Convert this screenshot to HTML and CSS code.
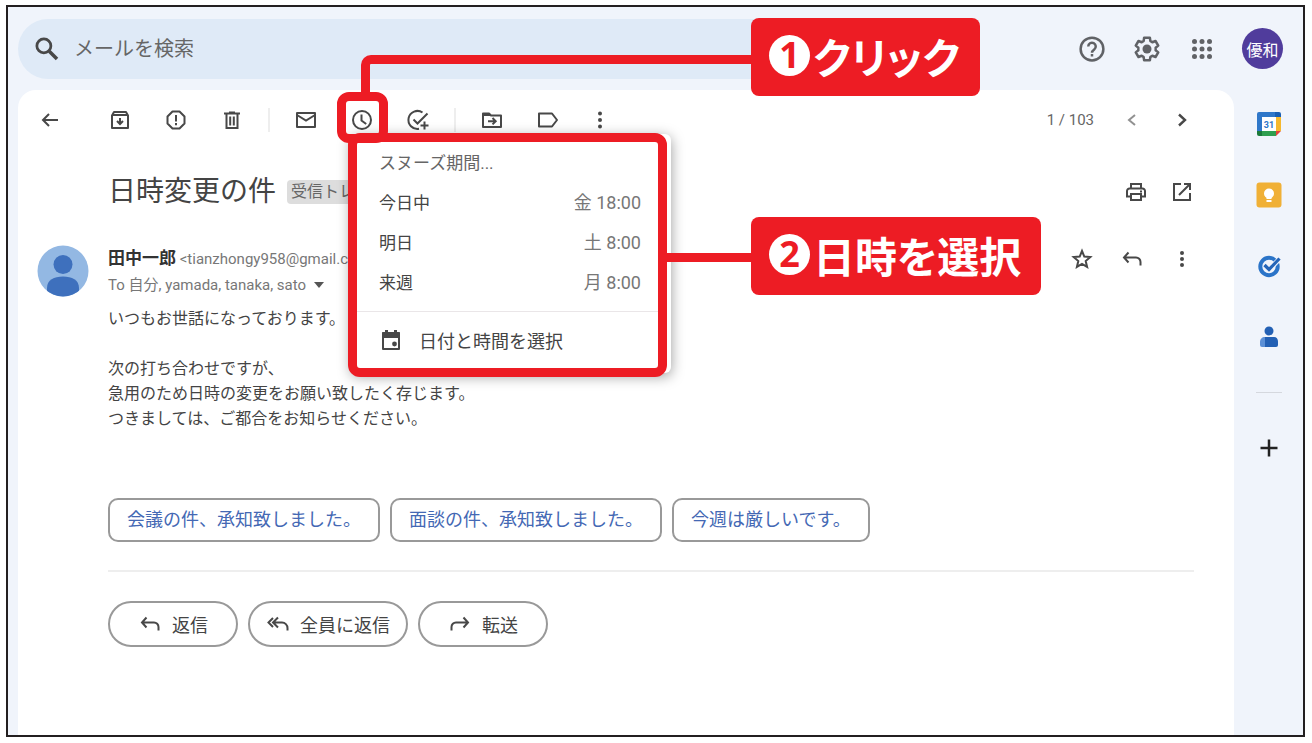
FILE: index.html
```html
<!DOCTYPE html>
<html lang="ja">
<head>
<meta charset="utf-8">
<meta name="viewport" content="width=device-width, initial-scale=1">
<title>日時変更の件</title>
<link rel="stylesheet" href="styles.css">
</head>
<body>
<div class="frame">
  <header class="topbar">
    <label class="search">
      <svg class="icon icon-lg" viewBox="0 0 24 24"><circle cx="9.5" cy="9.5" r="5.6" stroke-width="2.2"/><path d="M13.8 13.8L20 20" stroke-width="2.8"/></svg>
      <input class="search-input" type="search" placeholder="メールを検索" aria-label="メールを検索">
    </label>
    <nav class="top-actions">
      <button class="btn" aria-label="ヘルプ"><svg class="icon icon-lg soft" viewBox="0 0 24 24"><circle cx="12" cy="12" r="9.1"/><path d="M9 10a3 3 0 1 1 4.8 2.4c-1.1.8-1.8 1.3-1.8 2.6"/><path class="solid" d="M11 16h2v2h-2z"/></svg></button>
      <button class="btn" aria-label="設定"><svg class="icon icon-lg soft" viewBox="0 0 24 24"><path d="M18.9 13a7 7 0 0 0 0-2l2.100-1.700-2.200-3.700-2.500 1a7 7 0 0 0-1.600-.9L14.300 3h-4.600l-.4 2.700a7 7 0 0 0-1.600.9l-2.500-1L3 9.300 5.100 11a7 7 0 0 0 0 2L3 14.700l2.200 3.700 2.500-1a7 7 0 0 0 1.600.9l.4 2.700h4.600l.4-2.700a7 7 0 0 0 1.600-.9l2.500 1 2.200-3.700z" stroke-linejoin="round"/><circle class="solid" cx="12" cy="12" r="3.600"/></svg></button>
      <button class="btn" aria-label="アプリ"><svg class="icon icon-lg soft" viewBox="0 0 24 24"><g class="solid"><circle cx="6" cy="6" r="2"/><circle cx="12" cy="6" r="2"/><circle cx="18" cy="6" r="2"/><circle cx="6" cy="12" r="2"/><circle cx="12" cy="12" r="2"/><circle cx="18" cy="12" r="2"/><circle cx="6" cy="18" r="2"/><circle cx="12" cy="18" r="2"/><circle cx="18" cy="18" r="2"/></g></svg></button>
    </nav>
    <button class="btn account">優和</button>
  </header>

  <div class="workspace">
    <main class="mail">
      <div class="toolbar">
        <button class="btn back" aria-label="戻る"><svg class="icon" viewBox="0 0 24 24"><path d="M20 12H5.500M11 6l-6 6 6 6"/></svg></button>
        <div class="tools">
          <button class="btn" aria-label="アーカイブ"><svg class="icon" viewBox="0 0 24 24"><path d="M4 7.500V20h16V7.500L18 4H6z" stroke-linejoin="round"/><path d="M4 7h16M12 10v5.500M9 13l3 3 3-3"/></svg></button>
          <button class="btn" aria-label="迷惑メールを報告"><svg class="icon" viewBox="0 0 24 24"><path d="M8.500 3.500h7l5 5v7l-5 5h-7l-5-5v-7z" stroke-linejoin="round"/><path d="M12 7v6.500M12 15v2.200"/></svg></button>
          <button class="btn" aria-label="削除"><svg class="icon" viewBox="0 0 24 24"><path d="M4 5.500h16M9 4.500h6M6.500 6v14h11V6M10.200 8.500v9M13.800 8.500v9"/></svg></button>
        </div>
        <span class="separator"></span>
        <div class="tools">
          <button class="btn" aria-label="未読にする"><svg class="icon" viewBox="0 0 24 24"><path d="M3 5h18v14H3z" stroke-linejoin="round"/><path d="M3 7l9 5.500L21 7"/></svg></button>
          <button class="btn" aria-label="スヌーズ"><svg class="icon" viewBox="0 0 24 24"><circle cx="12" cy="12" r="9"/><path d="M11.500 6.500v6l4.700 3.500"/></svg></button>
          <button class="btn" aria-label="ToDoリストに追加"><svg class="icon" viewBox="0 0 24 24"><path d="M16.500 4.500A9 9 0 1 0 13 20.800M7.500 11.500l4 4L21.500 5.500M18.500 13.500v8M14.500 17.500h8"/></svg></button>
        </div>
        <span class="separator"></span>
        <div class="tools">
          <button class="btn" aria-label="移動"><svg class="icon" viewBox="0 0 24 24"><path d="M3 19V5.500h6l2 2h10V19z" stroke-linejoin="round"/><path class="solid" d="M3 5h6l3 3H3z"/><path d="M8 13.200h7M12.500 10l3.200 3.200-3.200 3.200"/></svg></button>
          <button class="btn" aria-label="ラベル"><svg class="icon" viewBox="0 0 24 24"><path d="M3 5.500h13l5 6.500-5 6.500H3z" stroke-linejoin="round"/></svg></button>
          <button class="btn narrow" aria-label="その他"><svg class="icon" viewBox="0 0 24 24"><g class="solid"><circle cx="12" cy="5.500" r="2"/><circle cx="12" cy="12" r="2"/><circle cx="12" cy="18.500" r="2"/></g></svg></button>
        </div>
        <div class="pager">
          <span class="count">1 / 103</span>
          <button class="btn faded" aria-label="前へ"><svg class="icon" viewBox="0 0 24 24"><path d="M15 7l-6 5 6 5"/></svg></button>
          <button class="btn" aria-label="次へ"><svg class="icon" viewBox="0 0 24 24"><path d="M9 6.500l6 5.500-6 5.500" stroke-width="2.400"/></svg></button>
        </div>
      </div>

      <div class="subject-row">
        <h1 class="subject">日時変更の件</h1>
        <span class="label">受信トレイ</span>
        <div class="row-actions">
          <button class="btn" aria-label="印刷"><svg class="icon" viewBox="0 0 24 24"><path d="M7 8V4h10v4M6.500 16.500H3V11a2.500 2.500 0 0 1 2.500-2.500h13A2.500 2.500 0 0 1 21 11v5.500h-3.500M7 14h10v6H7z"/><path d="M16 11.500h2"/></svg></button>
          <button class="btn" aria-label="新しいウィンドウで開く"><svg class="icon" viewBox="0 0 24 24"><path d="M11 4H4v16h16v-7M14 4h6v6M19.500 4.500L9 15"/></svg></button>
        </div>
      </div>

      <div class="sender-row">
        <svg class="sender-photo" viewBox="0 0 52 52"><defs><clipPath id="photo"><circle cx="26" cy="26" r="25.500"/></clipPath></defs><g clip-path="url(#photo)"><path fill="#93b8e3" d="M0 0h52v52H0z"/><circle cx="26" cy="19.500" r="9.500" fill="#3e70bd"/><path fill="#3e70bd" d="M10 52v-9c0-8 7-11.500 16-11.500S42 35 42 43v9z"/></g></svg>
        <div class="sender">
          <div class="sender-line"><strong class="sender-name">田中一郎</strong> <span class="address">&lt;tianzhongy958@gmail.com&gt;</span></div>
          <div class="recipients">To 自分, yamada, tanaka, sato <svg class="caret" viewBox="0 0 10 6"><path d="M0 0h10L5 6z"/></svg></div>
        </div>
        <div class="row-actions">
          <button class="btn" aria-label="スター"><svg class="icon" viewBox="0 0 24 24"><path d="M12 4l2.300 5.600 6 .5-4.600 3.900 1.400 5.900L12 16.800l-5.100 3.100 1.400-5.900-4.600-3.900 6-.5z"/></svg></button>
          <button class="btn" aria-label="返信"><svg class="icon" viewBox="0 0 24 24"><path d="M8.500 5.500l-4.500 5 4.500 5M4.500 10.500H16a4.500 4.500 0 0 1 4.500 4.500v3.500"/></svg></button>
          <button class="btn" aria-label="その他"><svg class="icon" viewBox="0 0 24 24"><g class="solid"><circle cx="12" cy="6" r="2"/><circle cx="12" cy="12" r="2"/><circle cx="12" cy="18" r="2"/></g></svg></button>
        </div>
      </div>

      <div class="content">
        <div class="message">
          <p>いつもお世話になっております。</p>
          <p>次の打ち合わせですが、<br>急用のため日時の変更をお願い致したく存じます。<br>つきましては、ご都合をお知らせください。</p>
        </div>
        <div class="suggestions">
          <button class="suggestion">会議の件、承知致しました。</button>
          <button class="suggestion">面談の件、承知致しました。</button>
          <button class="suggestion">今週は厳しいです。</button>
        </div>
        <div class="replies">
          <button class="reply"><svg class="icon" viewBox="0 0 24 24"><path d="M8.500 5.500l-4.500 5 4.500 5M4.500 10.500H16a4.500 4.500 0 0 1 4.500 4.500v3.500"/></svg>返信</button>
          <button class="reply wide"><svg class="icon" viewBox="0 0 24 24"><path d="M7 6l-4.500 4.500L7 15M12 5.500l-5 5 5 5M7.500 10.500H16a5.500 5.500 0 0 1 5.500 5.500v2.500"/></svg>全員に返信</button>
          <button class="reply"><svg class="icon" viewBox="0 0 24 24"><path d="M15.500 5.500l4.500 5-4.500 5M19.500 10.500H8A4.500 4.500 0 0 0 3.500 15v3.500"/></svg>転送</button>
        </div>
      </div>
    </main>

    <aside class="rail">
      <button class="btn" aria-label="カレンダー"><svg class="app" viewBox="0 0 26 26"><path fill="#fff" d="M5 5h16v16H5z"/><path fill="#2f77c9" d="M3 1h16v5H6v15H1V3a2 2 0 0 1 2-2z"/><path fill="#1a5fb4" d="M19 1h4a2 2 0 0 1 2 2v3h-6z"/><path fill="#f5b82e" d="M20 6h5v14h-5z"/><path fill="#2f9e4f" d="M6 20h14v5H6z"/><path fill="#1b7a3a" d="M1 20h5v5H3a2 2 0 0 1-2-2z"/><path fill="#e5413a" d="M20 20h5l-5 5z"/><text class="app-day" x="13" y="17" text-anchor="middle">31</text></svg></button>
      <button class="btn" aria-label="Keep"><svg class="app" viewBox="0 0 26 26"><rect x="0.500" y="0.500" width="25" height="25" rx="3" fill="#f0b036"/><circle cx="13" cy="11.500" r="5" fill="#fff"/><path fill="#fff" d="M10.500 14h5v3h-5zM10.500 18h5v2h-5z"/></svg></button>
      <button class="btn" aria-label="ToDo リスト"><svg class="app" viewBox="0 0 26 26"><circle cx="13" cy="13.500" r="8.700" fill="none" stroke="#2b74c8" stroke-width="4"/><path d="M9 12.500l4 4L23 6.500" fill="none" stroke="#f0f4fb" stroke-width="5"/><path d="M8.500 12l4.500 4.500L23.500 5.500" fill="none" stroke="#2565b8" stroke-width="3.200"/></svg></button>
      <button class="btn" aria-label="連絡先"><svg class="app" viewBox="0 0 26 26"><circle cx="13" cy="7" r="4.500" fill="#2360b4"/><path fill="#2360b4" d="M8 13h10c2.500 0 4 2 4 4.500V21a2 2 0 0 1-2 2H8z"/><path fill="#5b8fd6" d="M9 13c-3 0-5 2-5 5v3a2 2 0 0 0 2 2h3z"/></svg></button>
      <hr class="rail-line">
      <button class="btn" aria-label="アドオンを取得"><svg class="app plus" viewBox="0 0 26 26"><path d="M13 4.500v17M4.500 13h17"/></svg></button>
    </aside>
  </div>

  <div class="snooze-menu" role="menu">
    <div class="menu-title">スヌーズ期間...</div>
    <button class="menu-item" role="menuitem"><span>今日中</span><span class="when">金 18:00</span></button>
    <button class="menu-item" role="menuitem"><span>明日</span><span class="when">土 8:00</span></button>
    <button class="menu-item" role="menuitem"><span>来週</span><span class="when">月 8:00</span></button>
    <button class="menu-item pick" role="menuitem"><svg class="icon" viewBox="0 0 24 24"><path d="M4 5h16v16H4z" stroke-linejoin="round"/><path class="solid" d="M3.500 4h17v6h-17zM6 2h3v3H6zM15 2h3v3h-3z"/><circle class="solid" cx="15.500" cy="16" r="2.400"/></svg>日付と時間を選択</button>
  </div>
  <div class="line line-click"></div>
  <div class="line line-select"></div>
  <div class="click-mark"></div>
  <div class="callout callout-click"><span class="step">1</span>クリック</div>
  <div class="callout callout-select"><span class="step">2</span>日時を選択</div>
</div>
</body>
</html>
```
FILE: styles.css
```css
:root {
  --red: #ed1c24;
  --ink: #444;
  --muted: #777;
  --surface: #f0f4fb;
}

* { box-sizing: border-box; }

body {
  margin: 0;
  padding: 5px 7px 6px 6px;
  min-height: 100vh;
  display: flex;
  background: #fff;
  color: var(--ink);
  font-family: Roboto, "Noto Sans CJK JP", sans-serif;
  font-size: 16px;
}

button, input { font: inherit; color: inherit; }
button { cursor: pointer; }

.frame {
  position: relative;
  flex: 1;
  display: flex;
  flex-direction: column;
  min-width: 0;
  border: 2px solid #231f20;
  background: var(--surface);
}

.btn {
  display: flex;
  align-items: center;
  justify-content: center;
  padding: 0;
  border: 0;
  background: none;
}

.icon {
  flex: none;
  width: 24px;
  height: 24px;
  fill: none;
  stroke: #484848;
  stroke-width: 2;
}
.icon-lg { width: 30px; height: 30px; }
.soft { stroke: #606266; }
.solid { fill: #484848; stroke: none; }
.soft .solid { fill: #606266; }

/* Header */
.topbar {
  display: flex;
  align-items: center;
  height: 83px;
  padding: 0 20px 0 10px;
}
.search {
  display: flex;
  flex: 0 1 860px;
  align-items: center;
  gap: 10px;
  height: 60px;
  padding: 0 14px;
  border-radius: 30px;
  background: #dfeaf7;
}
.search-input {
  flex: 1;
  min-width: 0;
  border: 0;
  outline: 0;
  background: none;
  font-size: 20px;
}
.search-input::placeholder { color: #666; opacity: 1; }
.top-actions {
  display: flex;
  gap: 25px;
  margin-left: auto;
}
.account {
  width: 41px;
  height: 41px;
  margin-left: 25px;
  border-radius: 50%;
  background: #503c9c;
  color: #fff;
  font-size: 16px;
  white-space: nowrap;
}

/* Mail panel */
.workspace { display: flex; flex: 1; }
.mail {
  flex: 1;
  min-width: 0;
  margin-left: 10px;
  border-radius: 18px 18px 0 0;
  background: #fff;
}
.toolbar {
  display: flex;
  align-items: center;
  height: 60px;
  padding: 0 40px 0 20px;
}
.back { margin-right: 46px; }
.tools { display: flex; gap: 32px; }
.narrow { width: 16px; }
.separator {
  width: 2px;
  height: 24px;
  margin: 0 24px;
  background: #eee;
}
.pager {
  display: flex;
  align-items: center;
  gap: 26px;
  margin-left: auto;
  color: #666;
}
.count { font-size: 15px; }
.faded { opacity: .6; }

.subject-row {
  display: flex;
  align-items: center;
  height: 84px;
  padding: 0 40px 0 90px;
}
.subject {
  margin: 0 11px 0 0;
  font-size: 28px;
  font-weight: 400;
  line-height: 40px;
}
.label {
  padding: 0 4px;
  border-radius: 4px;
  background: #ddd;
  color: #666;
  line-height: 24px;
}
.row-actions {
  display: flex;
  gap: 26px;
  margin-left: auto;
}
.subject-row .row-actions { gap: 22px; }

.sender-row {
  display: flex;
  align-items: flex-start;
  gap: 19px;
  padding: 11px 40px 0 19px;
}
.sender-row .row-actions { padding-top: 2px; }
.sender-photo { width: 52px; height: 52px; }
.sender { line-height: 26px; color: var(--muted); font-size: 15px; }
.sender-name { color: #333; font-size: 17px; }
.caret {
  width: 10px;
  height: 6px;
  margin: 0 0 2px 4px;
  fill: #555;
}

.content { padding: 8px 40px 0 90px; }
.message { line-height: 25px; }
.message p { margin: 0 0 25px; }
.suggestions {
  display: flex;
  gap: 10px;
  margin-top: 67px;
  padding-bottom: 28px;
  border-bottom: 2px solid #eee;
}
.suggestion {
  height: 44px;
  padding: 0 17px;
  border: 2px solid #999;
  border-radius: 10px;
  background: #fff;
  color: #4468b4;
  font-size: 18px;
  line-height: 36px;
  white-space: nowrap;
}
.replies {
  display: flex;
  gap: 10px;
  margin-top: 29px;
}
.reply {
  display: flex;
  align-items: center;
  justify-content: center;
  gap: 10px;
  height: 46px;
  padding: 0 28px;
  border: 2px solid #999;
  border-radius: 23px;
  background: #fff;
  font-size: 18px;
  white-space: nowrap;
}
.wide { padding: 0 16px; }

/* Side rail */
.rail {
  display: flex;
  flex: 0 0 69px;
  flex-direction: column;
  align-items: center;
  gap: 45px;
  padding-top: 21px;
}
.app { width: 26px; height: 26px; }
.app-day {
  fill: #2f77c9;
  font-size: 9px;
  font-weight: 700;
}
.rail-line {
  width: 26px;
  margin: -3px 0;
  border: 0;
  border-top: 1px solid #d5d8de;
}
.plus { fill: none; stroke: #222; stroke-width: 2.5; }

/* Snooze menu: ::before is the card, ::after the red outline over it */
.snooze-menu {
  position: absolute;
  z-index: 1;
  left: 340px;
  top: 126px;
  width: 319px;
  padding: 9px;
  font-size: 17px;
}
.snooze-menu::before {
  content: "";
  position: absolute;
  z-index: -1;
  inset: 1px -4px 4px 3px;
  border-radius: 6px;
  background: #fff;
  box-shadow: 0 3px 14px rgba(0, 0, 0, .4);
}
.snooze-menu::after {
  content: "";
  position: absolute;
  inset: 0;
  border: 9px solid var(--red);
  border-radius: 12px;
  pointer-events: none;
}
.menu-title {
  padding: 4px 0 0 22px;
  color: #666;
  line-height: 35px;
}
.menu-item {
  display: flex;
  align-items: center;
  justify-content: space-between;
  width: 100%;
  height: 40px;
  padding: 0 17px 0 22px;
  border: 0;
  background: none;
}
.when { color: var(--muted); font-size: 18px; }
.pick {
  justify-content: flex-start;
  gap: 16px;
  height: 57px;
  margin-top: 10px;
  border-top: 1px solid #eae6e8;
  font-size: 18px;
}

/* Step annotations */
.line, .click-mark, .callout { position: absolute; z-index: 2; }
.line-click {
  left: 353px;
  top: 48px;
  width: 392px;
  height: 40px;
  border: solid var(--red);
  border-width: 9px 0 0 9px;
  border-top-left-radius: 10px;
}
.line-select {
  left: 655px;
  top: 246px;
  width: 90px;
  height: 9px;
  background: var(--red);
}
.click-mark {
  left: 329px;
  top: 85px;
  width: 51px;
  height: 51px;
  border: 9px solid var(--red);
  border-radius: 12px;
}
.callout {
  left: 743px;
  display: flex;
  align-items: center;
  gap: 3px;
  height: 78px;
  padding: 0 20px 4px 18px;
  border-radius: 8px;
  background: var(--red);
  color: #fff;
  font-family: "Noto Sans CJK JP", sans-serif;
  font-size: 42px;
  font-weight: 700;
  font-feature-settings: "palt";
  white-space: nowrap;
}
.callout-click { top: 11px; }
.callout-select { top: 210px; }
.step {
  display: grid;
  place-items: center;
  width: 41px;
  height: 41px;
  border-radius: 50%;
  background: #fff;
  color: var(--red);
  font-family: "Noto Sans", sans-serif;
  font-size: 36px;
  line-height: 40px;
}
```
